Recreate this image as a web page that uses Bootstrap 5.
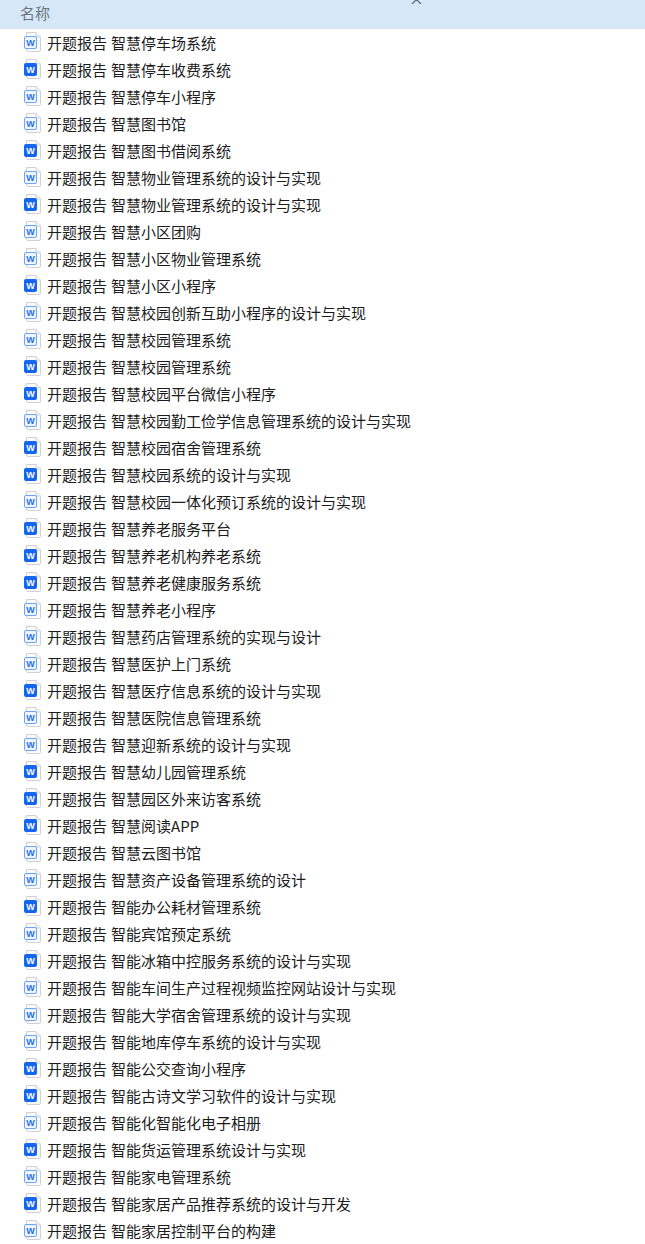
<!DOCTYPE html>
<html lang="zh">
<head>
<meta charset="utf-8">
<title>名称</title>
<link href="https://cdn.jsdelivr.net/npm/bootstrap@5.3.0/dist/css/bootstrap.min.css" rel="stylesheet">
<style>
body{font-family:"Noto Sans CJK SC","Liberation Sans",sans-serif;font-size:15px;color:#1c1c1c;background:#fff;overflow:hidden}
.head-bar{height:29px;background:#d6e8f8;color:#6d7680;padding-left:20px;line-height:25px}
.head-arrow{position:absolute;left:411px;top:-1px;width:11px;height:5px}
.file-row{height:27px;padding-left:22px;gap:5px;line-height:27px;word-spacing:.7px;white-space:nowrap}
.file-ico{width:20px;height:20px;flex:none;margin-top:-2px}
.ico-w{font-family:"Liberation Sans",sans-serif;font-size:9px;font-weight:700}
</style>
</head>
<body>
<svg class="d-none">
<symbol id="w-light" viewBox="0 0 20 20">
<path d="M4.500.5H14L18.500 5V18a1.500 1.500 0 0 1-1.500 1.500H6a1.500 1.500 0 0 1-1.500-1.500Z" fill="#fbfbfb" stroke="#cfd1d5"/>
<path d="M14 .5V5h4.500" fill="#eceef0" stroke="#d4d6da"/>
<rect x="2.500" y="4.500" width="12" height="12" rx="1.500" fill="#eef5ff" stroke="#6ba5f6"/>
<text x="8.500" y="13.500" text-anchor="middle" class="ico-w" fill="#1f6fe8">W</text>
</symbol>
<symbol id="w-dark" viewBox="0 0 20 20">
<path d="M4.500.5H14L18.500 5V18a1.500 1.500 0 0 1-1.500 1.500H6a1.500 1.500 0 0 1-1.500-1.500Z" fill="#fbfbfb" stroke="#cfd1d5"/>
<path d="M14 .5V5h4.500" fill="#eceef0" stroke="#d4d6da"/>
<rect x="2" y="4" width="13" height="13" rx="2" fill="#1466ee"/>
<text x="8.500" y="13.500" text-anchor="middle" class="ico-w" fill="#fff">W</text>
</symbol>
</svg>
<div class="head-bar position-relative">名称
<svg class="head-arrow" viewBox="0 0 11 5"><path d="M1 5 5.500.5 10 5" fill="none" stroke="#5f6b78" stroke-width="1.300"/></svg>
</div>
<ul class="list-unstyled m-0" id="files">
<li class="file-row d-flex align-items-center"><svg class="file-ico"><use href="#w-light"/></svg><span>开题报告 智慧停车场系统</span></li>
<li class="file-row d-flex align-items-center"><svg class="file-ico"><use href="#w-dark"/></svg><span>开题报告 智慧停车收费系统</span></li>
<li class="file-row d-flex align-items-center"><svg class="file-ico"><use href="#w-light"/></svg><span>开题报告 智慧停车小程序</span></li>
<li class="file-row d-flex align-items-center"><svg class="file-ico"><use href="#w-light"/></svg><span>开题报告 智慧图书馆</span></li>
<li class="file-row d-flex align-items-center"><svg class="file-ico"><use href="#w-dark"/></svg><span>开题报告 智慧图书借阅系统</span></li>
<li class="file-row d-flex align-items-center"><svg class="file-ico"><use href="#w-light"/></svg><span>开题报告 智慧物业管理系统的设计与实现</span></li>
<li class="file-row d-flex align-items-center"><svg class="file-ico"><use href="#w-dark"/></svg><span>开题报告 智慧物业管理系统的设计与实现</span></li>
<li class="file-row d-flex align-items-center"><svg class="file-ico"><use href="#w-light"/></svg><span>开题报告 智慧小区团购</span></li>
<li class="file-row d-flex align-items-center"><svg class="file-ico"><use href="#w-light"/></svg><span>开题报告 智慧小区物业管理系统</span></li>
<li class="file-row d-flex align-items-center"><svg class="file-ico"><use href="#w-dark"/></svg><span>开题报告 智慧小区小程序</span></li>
<li class="file-row d-flex align-items-center"><svg class="file-ico"><use href="#w-light"/></svg><span>开题报告 智慧校园创新互助小程序的设计与实现</span></li>
<li class="file-row d-flex align-items-center"><svg class="file-ico"><use href="#w-light"/></svg><span>开题报告 智慧校园管理系统</span></li>
<li class="file-row d-flex align-items-center"><svg class="file-ico"><use href="#w-dark"/></svg><span>开题报告 智慧校园管理系统</span></li>
<li class="file-row d-flex align-items-center"><svg class="file-ico"><use href="#w-dark"/></svg><span>开题报告 智慧校园平台微信小程序</span></li>
<li class="file-row d-flex align-items-center"><svg class="file-ico"><use href="#w-light"/></svg><span>开题报告 智慧校园勤工俭学信息管理系统的设计与实现</span></li>
<li class="file-row d-flex align-items-center"><svg class="file-ico"><use href="#w-dark"/></svg><span>开题报告 智慧校园宿舍管理系统</span></li>
<li class="file-row d-flex align-items-center"><svg class="file-ico"><use href="#w-dark"/></svg><span>开题报告 智慧校园系统的设计与实现</span></li>
<li class="file-row d-flex align-items-center"><svg class="file-ico"><use href="#w-light"/></svg><span>开题报告 智慧校园一体化预订系统的设计与实现</span></li>
<li class="file-row d-flex align-items-center"><svg class="file-ico"><use href="#w-dark"/></svg><span>开题报告 智慧养老服务平台</span></li>
<li class="file-row d-flex align-items-center"><svg class="file-ico"><use href="#w-dark"/></svg><span>开题报告 智慧养老机构养老系统</span></li>
<li class="file-row d-flex align-items-center"><svg class="file-ico"><use href="#w-dark"/></svg><span>开题报告 智慧养老健康服务系统</span></li>
<li class="file-row d-flex align-items-center"><svg class="file-ico"><use href="#w-light"/></svg><span>开题报告 智慧养老小程序</span></li>
<li class="file-row d-flex align-items-center"><svg class="file-ico"><use href="#w-light"/></svg><span>开题报告 智慧药店管理系统的实现与设计</span></li>
<li class="file-row d-flex align-items-center"><svg class="file-ico"><use href="#w-light"/></svg><span>开题报告 智慧医护上门系统</span></li>
<li class="file-row d-flex align-items-center"><svg class="file-ico"><use href="#w-dark"/></svg><span>开题报告 智慧医疗信息系统的设计与实现</span></li>
<li class="file-row d-flex align-items-center"><svg class="file-ico"><use href="#w-light"/></svg><span>开题报告 智慧医院信息管理系统</span></li>
<li class="file-row d-flex align-items-center"><svg class="file-ico"><use href="#w-light"/></svg><span>开题报告 智慧迎新系统的设计与实现</span></li>
<li class="file-row d-flex align-items-center"><svg class="file-ico"><use href="#w-dark"/></svg><span>开题报告 智慧幼儿园管理系统</span></li>
<li class="file-row d-flex align-items-center"><svg class="file-ico"><use href="#w-dark"/></svg><span>开题报告 智慧园区外来访客系统</span></li>
<li class="file-row d-flex align-items-center"><svg class="file-ico"><use href="#w-dark"/></svg><span>开题报告 智慧阅读APP</span></li>
<li class="file-row d-flex align-items-center"><svg class="file-ico"><use href="#w-light"/></svg><span>开题报告 智慧云图书馆</span></li>
<li class="file-row d-flex align-items-center"><svg class="file-ico"><use href="#w-light"/></svg><span>开题报告 智慧资产设备管理系统的设计</span></li>
<li class="file-row d-flex align-items-center"><svg class="file-ico"><use href="#w-dark"/></svg><span>开题报告 智能办公耗材管理系统</span></li>
<li class="file-row d-flex align-items-center"><svg class="file-ico"><use href="#w-light"/></svg><span>开题报告 智能宾馆预定系统</span></li>
<li class="file-row d-flex align-items-center"><svg class="file-ico"><use href="#w-dark"/></svg><span>开题报告 智能冰箱中控服务系统的设计与实现</span></li>
<li class="file-row d-flex align-items-center"><svg class="file-ico"><use href="#w-light"/></svg><span>开题报告 智能车间生产过程视频监控网站设计与实现</span></li>
<li class="file-row d-flex align-items-center"><svg class="file-ico"><use href="#w-light"/></svg><span>开题报告 智能大学宿舍管理系统的设计与实现</span></li>
<li class="file-row d-flex align-items-center"><svg class="file-ico"><use href="#w-light"/></svg><span>开题报告 智能地库停车系统的设计与实现</span></li>
<li class="file-row d-flex align-items-center"><svg class="file-ico"><use href="#w-dark"/></svg><span>开题报告 智能公交查询小程序</span></li>
<li class="file-row d-flex align-items-center"><svg class="file-ico"><use href="#w-dark"/></svg><span>开题报告 智能古诗文学习软件的设计与实现</span></li>
<li class="file-row d-flex align-items-center"><svg class="file-ico"><use href="#w-light"/></svg><span>开题报告 智能化智能化电子相册</span></li>
<li class="file-row d-flex align-items-center"><svg class="file-ico"><use href="#w-dark"/></svg><span>开题报告 智能货运管理系统设计与实现</span></li>
<li class="file-row d-flex align-items-center"><svg class="file-ico"><use href="#w-light"/></svg><span>开题报告 智能家电管理系统</span></li>
<li class="file-row d-flex align-items-center"><svg class="file-ico"><use href="#w-dark"/></svg><span>开题报告 智能家居产品推荐系统的设计与开发</span></li>
<li class="file-row d-flex align-items-center"><svg class="file-ico"><use href="#w-light"/></svg><span>开题报告 智能家居控制平台的构建</span></li>
</ul>
<script src="https://cdn.jsdelivr.net/npm/bootstrap@5.3.0/dist/js/bootstrap.bundle.min.js"></script>
</body>
</html>
